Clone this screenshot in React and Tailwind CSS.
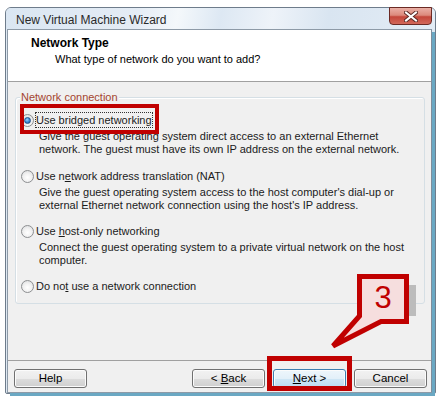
import React from "react";

function Radio({ checked }) {
  return (
    <span className="relative flex h-[13px] w-[13px] shrink-0 items-center justify-center rounded-full border border-[#8d8f91] bg-[radial-gradient(circle_at_50%_60%,#ffffff_0%,#f2f2f2_45%,#d6d8da_100%)]">
      {checked && (
        <span className="h-[7px] w-[7px] rounded-full border border-[#1d4f8a] bg-[radial-gradient(circle_at_40%_35%,#9fd3ff_0%,#3f8fd6_50%,#1a4f8f_100%)]" />
      )}
    </span>
  );
}

function Option({ checked, focused, label, desc, className = "" }) {
  return (
    <div className={className}>
      <div className="flex items-center pl-[5px]">
        <Radio checked={checked} />
        <span
          className={`ml-[1px] border leading-[14px] ${
            focused ? "border-dotted border-[#333]" : "border-transparent"
          }`}
        >
          {label}
        </span>
      </div>
      {desc && <div className="mt-[2px] pl-[23px] leading-[13px]">{desc}</div>}
    </div>
  );
}

function Button({ children, primary }) {
  return (
    <button
      className={`h-[19px] w-[73px] rounded-[3px] border text-[11.5px] leading-[17px] text-black shadow-[inset_0_0_0_1px_#fbfbfb] ${
        primary
          ? "border-[#3c7fb1] bg-[linear-gradient(#eef6fb_0%,#e3f0f9_50%,#cfe6f5_51%,#bcdcf1_100%)]"
          : "border-[#707070] bg-[linear-gradient(#f2f2f2_0%,#ebebeb_50%,#dddddd_51%,#cfcfcf_100%)]"
      }`}
    >
      {children}
    </button>
  );
}

export default function App() {
  return (
    <div className="relative h-[397px] w-[440px] overflow-hidden bg-white font-['Liberation_Sans',Arial,sans-serif] text-[11px] text-[#1b1b1b]">
      <div className="pl-[5px] pt-[7px]">
        {/* window */}
        <div className="flex h-[387px] w-[431px] flex-col rounded-t-[6px] rounded-b-[2px] border border-[#6e7c8b] bg-[#dfe9f3]">
          {/* title bar */}
          <div className="flex h-[21px] items-start justify-between rounded-t-[5px] bg-[linear-gradient(100deg,#dae6f2_0%,#e4ecf5_30%,#f4f8fb_40%,#dde8f3_50%,#eef3f9_62%,#d9e5f1_75%,#e3ecf5_100%)]">
            <div className="pl-[10px] pt-[2px] text-[12px] leading-[20px] text-[#2a2a2a]">New Virtual Machine Wizard</div>
            <div className="-mt-[1px] mr-[3px] flex h-[18px] w-[43px] items-center justify-center rounded-b-[4px] border border-[#6b2a24] bg-[linear-gradient(#eab0a6_0%,#dc8a7c_45%,#c4473a_55%,#d2685a_100%)]">
              <svg width="14" height="11" viewBox="0 0 14 11">
                <path d="M2 1.5 L12 9.5 M12 1.5 L2 9.5" stroke="#5a2a26" strokeWidth="4" strokeLinecap="square" />
                <path d="M2 1.5 L12 9.5 M12 1.5 L2 9.5" stroke="#ffffff" strokeWidth="2" strokeLinecap="square" />
              </svg>
            </div>
          </div>

          {/* client area */}
          <div className="ml-[1px] mr-[3px] flex flex-1 flex-col border border-[#8d9aa7] border-r-[#7f8d9b] bg-[#f0f0f0] shadow-[3px_3px_0_0_#6aa8c3]">
            {/* header */}
            <div className="h-[52px] border-b border-[#a0a0a0] bg-white">
              <div className="pl-[23px] pt-[5px] text-[12px] font-bold leading-[16px] text-black">Network Type</div>
              <div className="pl-[47px] leading-[16px] text-black">What type of network do you want to add?</div>
            </div>

            {/* body */}
            <div className="flex-1 pt-[15px]">
              <div className="relative ml-[7px] mr-[6px] rounded-[3px] border border-[#d5dfe5] pb-[9px] pt-[14px] shadow-[inset_1px_1px_0_0_#ffffff]">
                <div className="absolute -top-[8px] left-[4px] bg-[#f0f0f0] px-[1px] leading-[14px] text-[#a4452f]">
                  Network connection
                </div>
                <Option
                  checked
                  focused
                  label="Use bridged networking"
                  desc={
                    <>
                      Give the guest operating system direct access to an external Ethernet
                      <br />
                      network. The guest must have its own IP address on the external network.
                    </>
                  }
                />
                <Option
                  className="mt-[12px]"
                  label={
                    <>
                      Use n<span className="underline">e</span>twork address translation (NAT)
                    </>
                  }
                  desc={
                    <>
                      Give the guest operating system access to the host computer's dial-up or
                      <br />
                      external Ethernet network connection using the host's IP address.
                    </>
                  }
                />
                <Option
                  className="mt-[11px]"
                  label={
                    <>
                      Use <span className="underline">h</span>ost-only networking
                    </>
                  }
                  desc={
                    <>
                      Connect the guest operating system to a private virtual network on the host
                      <br />
                      computer.
                    </>
                  }
                />
                <Option
                  className="mt-[11px]"
                  label={
                    <>
                      Do no<span className="underline">t</span> use a network connection
                    </>
                  }
                />
              </div>
            </div>

            {/* footer */}
            <div className="flex h-[32px] items-start border-t border-[#a0a0a0] pl-[6px] pr-[4px] pt-[8px]">
              <Button>Help</Button>
              <div className="flex-1" />
              <div className="flex gap-[8px]">
                <Button>
                  &lt; <span className="underline">B</span>ack
                </Button>
                <Button primary>
                  <span className="underline">N</span>ext &gt;
                </Button>
                <Button>Cancel</Button>
              </div>
            </div>
          </div>
        </div>
      </div>

      {/* annotation: highlight on first option */}
      <div className="absolute left-[20px] top-[104px] h-[30px] w-[139px] border-[4px] border-[#c00000]" />
      {/* annotation: highlight on Next */}
      <div className="absolute left-[267px] top-[356px] h-[35px] w-[85px] border-[5px] border-[#c00000]" />

      {/* annotation: numbered callout */}
      <svg className="absolute left-0 top-0" width="440" height="397" viewBox="0 0 440 397">
        <rect x="364" y="285" width="52" height="31" fill="#bcbcbc" />
        <path
          d="M359.5 276.5 H406.5 V321.5 H381 L333 346 L359.5 316 Z"
          fill="#f6dede"
          stroke="#c00000"
          strokeWidth="5"
          strokeLinejoin="miter"
        />
      </svg>
      <div className="absolute left-[362px] top-[279px] flex h-[36px] w-[42px] items-center justify-center text-[31px] leading-none text-[#c00000]">
        3
      </div>
    </div>
  );
}
